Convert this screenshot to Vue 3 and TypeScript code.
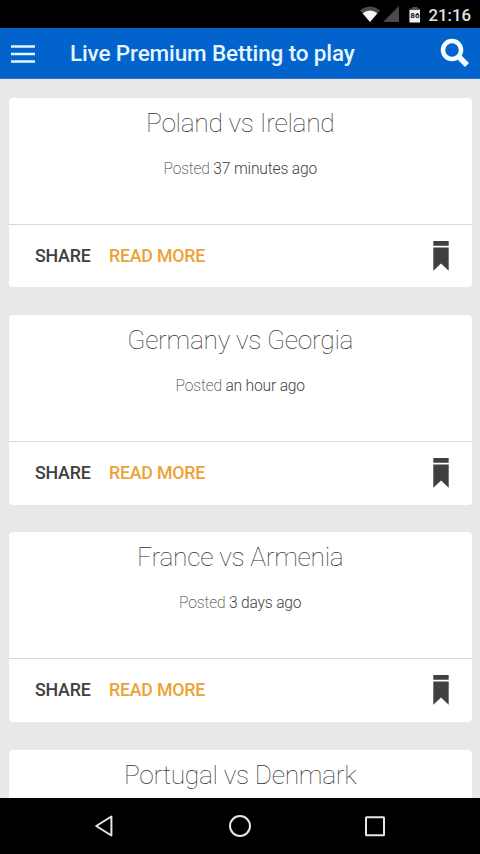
<script setup lang="ts">
interface Post {
  title: string
  age?: string
}

const posts: Post[] = [
  { title: 'Poland vs Ireland', age: '37 minutes ago' },
  { title: 'Germany vs Georgia', age: 'an hour ago' },
  { title: 'France vs Armenia', age: '3 days ago' },
  { title: 'Portugal vs Denmark' },
]
</script>

<template>
  <div class="screen">
    <div class="status">
      <svg class="wifi" width="20" height="16" viewBox="0 0 20 16">
        <path d="M0 4.2Q10-3 20 4.2L10 16Z" fill="#4a4a4a" />
        <path d="M2.6 7.2Q10 2 17.4 7.2L10 16Z" fill="#f5f5f5" />
      </svg>
      <svg class="signal" width="16" height="16" viewBox="0 0 16 16">
        <path d="M16 0V16H0Z" fill="#4a4a4a" />
      </svg>
      <span class="battery">86</span>
      <span class="clock">21:16</span>
    </div>

    <header class="bar">
      <svg class="menu" width="24" height="18" viewBox="0 0 24 18">
        <path d="M0 1.5H24M0 9H24M0 16.5H24" stroke="#e4f5ff" stroke-width="2.4" />
      </svg>
      <h1>Live Premium Betting to play</h1>
      <svg class="search" width="30" height="30" viewBox="0 0 30 30">
        <circle cx="12" cy="12" r="9" fill="none" stroke="#f5fcff" stroke-width="4.5" />
        <path d="M18.3 18.3L27 27" stroke="#f5fcff" stroke-width="5.6" />
      </svg>
    </header>

    <main class="feed">
      <article v-for="post in posts" :key="post.title" class="card">
        <div class="body">
          <h2>{{ post.title }}</h2>
          <p v-if="post.age">Posted <span>{{ post.age }}</span></p>
        </div>
        <div v-if="post.age" class="actions">
          <span class="share">SHARE</span>
          <span class="more">READ MORE</span>
          <svg class="mark" width="16" height="30" viewBox="0 0 16 30">
            <path d="M.3 0H15.7V4.8H.3ZM.3 6.5H15.7V29.8L8 22.5L.3 29.8Z" fill="#404040" />
          </svg>
        </div>
      </article>
    </main>

    <nav class="nav">
      <svg width="24" height="24" viewBox="0 0 24 24">
        <path d="M3.2 12L18.4 2.5V21.5Z" />
      </svg>
      <svg width="24" height="24" viewBox="0 0 24 24">
        <circle cx="12" cy="12" r="10" />
      </svg>
      <svg width="24" height="24" viewBox="0 0 24 24">
        <rect x="3" y="3.2" width="18" height="18" rx=".5" />
      </svg>
    </nav>
  </div>
</template>

<style>
body {
  margin: 0;
  overflow: hidden;
}
</style>

<style scoped>
.screen {
  display: flex;
  flex-direction: column;
  width: 480px;
  height: 854px;
  overflow: hidden;
  background: #e9e8e8;
  font-family: Roboto, sans-serif;
}

.status {
  flex: none;
  display: flex;
  align-items: center;
  justify-content: flex-end;
  box-sizing: border-box;
  height: 28px;
  padding-right: 9px;
  background: #000;
}

.signal {
  margin-left: 3px;
}

.battery {
  width: 11px;
  height: 16px;
  margin: 1px 8px 0 10px;
  background: linear-gradient(#555 3px, #f0f0f0 3px);
  clip-path: polygon(0 2px, 3px 2px, 3px 0, 8px 0, 8px 2px, 100% 2px, 100% 100%, 0 100%);
  color: #111;
  font-size: 8px;
  font-weight: 700;
  line-height: 17px;
  text-align: center;
}

.clock {
  margin-top: 1px;
  color: #e2e2e2;
  font-size: 16.8px;
  font-weight: 500;
  line-height: 28px;
}

.bar {
  flex: none;
  display: flex;
  align-items: center;
  box-sizing: border-box;
  height: 51px;
  padding: 0 10px 0 11px;
  background: #0263cd;
  border-bottom: 1px solid #2d74c6;
}

.menu {
  margin-top: 1px;
}

h1 {
  flex: 1;
  margin: 0 0 0 35px;
  color: #e4f5ff;
  font-size: 22.5px;
  font-weight: 500;
  letter-spacing: -0.14px;
  line-height: 50px;
  white-space: nowrap;
}

.feed {
  flex: 1;
  display: flex;
  flex-direction: column;
  gap: 27.8px;
  min-height: 0;
  overflow: hidden;
  padding: 19px 8.5px 0 9px;
}

.card {
  flex: none;
  box-sizing: border-box;
  height: 189.4px;
  border-radius: 4px;
  background: #fff;
}

.body {
  box-sizing: border-box;
  height: 127px;
  border-bottom: 1px solid #d9d9d9;
  text-align: center;
}

h2 {
  margin: 0;
  padding-top: 7px;
  color: #333;
  font-size: 26.4px;
  font-weight: 100;
  letter-spacing: -0.32px;
  line-height: 36px;
}

p {
  margin: 18px 0 0;
  color: #444;
  font-size: 15.6px;
  font-weight: 200;
  letter-spacing: -0.18px;
  line-height: 20px;
}

p span {
  font-weight: 300;
}

.actions {
  display: flex;
  align-items: center;
  height: 62px;
  padding: 0 23px 0 26px;
  font-size: 17.8px;
  font-weight: 500;
  letter-spacing: -0.22px;
  line-height: 20px;
}

.share,
.more {
  padding-bottom: 1px;
}

.share {
  color: #404040;
}

.more {
  margin-left: 18.5px;
  color: #eda235;
}

.mark {
  margin-left: auto;
}

.nav {
  flex: none;
  display: flex;
  align-items: center;
  justify-content: space-between;
  box-sizing: border-box;
  height: 56px;
  padding: 0 93px;
  background: #000;
}

.nav svg {
  fill: none;
  stroke: #e6e6e6;
  stroke-width: 2;
  stroke-linejoin: round;
}
</style>
